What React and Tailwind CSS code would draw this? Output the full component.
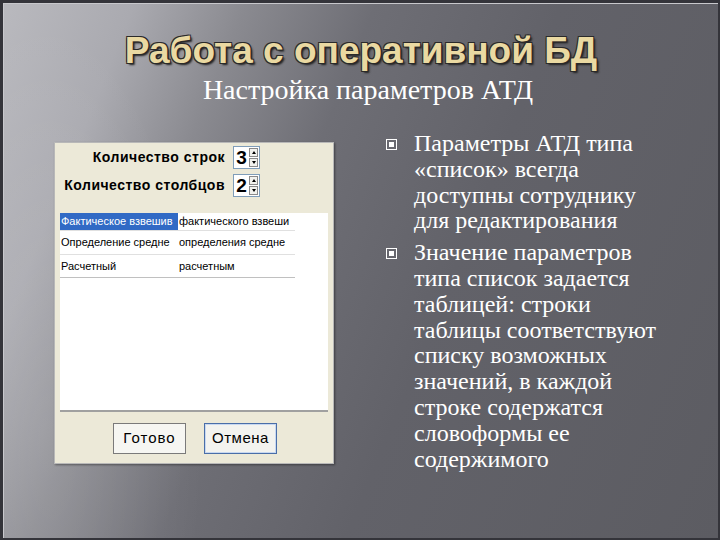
import React from "react";

function Spinner({ value }) {
  return (
    <div className="flex h-[23px] w-[27px] items-stretch border border-[#7f9db9] bg-white">
      <div className="flex flex-1 items-center justify-center font-['Liberation_Sans',sans-serif] text-[19px] font-bold leading-none text-black">
        {value}
      </div>
      <div className="flex w-[10px] flex-col gap-[1px] py-[1px] pr-[1px]">
        <div className="flex flex-1 items-center justify-center border border-[#8a8a8a] bg-[#f2f2ee]">
          <div className="h-0 w-0 border-x-[2px] border-b-[3px] border-x-transparent border-b-black" />
        </div>
        <div className="flex flex-1 items-center justify-center border border-[#8a8a8a] bg-[#f2f2ee]">
          <div className="h-0 w-0 border-x-[2px] border-t-[3px] border-x-transparent border-t-black" />
        </div>
      </div>
    </div>
  );
}

function Bullet() {
  return (
    <div className="mt-[8px] flex h-[11px] w-[11px] shrink-0 items-center justify-center border border-white">
      <div className="h-[5px] w-[5px] bg-white" />
    </div>
  );
}

function Lines({ lines }) {
  return (
    <div className="flex flex-col whitespace-nowrap">
      {lines.map((l) => (
        <span key={l}>{l}</span>
      ))}
    </div>
  );
}

export default function App() {
  return (
    <div className="h-[540px] w-[720px] overflow-hidden bg-[#34343a] pl-[3px] pt-[3px] pr-[2px] pb-[2px]">
      <div className="relative flex h-full w-full flex-col border-l border-t border-[#c8c8cc] bg-[radial-gradient(ellipse_160px_420px_at_40px_430px,rgba(255,255,255,0.12),transparent),linear-gradient(112deg,#b9b9be_0%,#aaaab0_14%,#8a8a90_26%,#6e6e75_40%,#626269_60%,#5c5c62_100%)]">
        <div className="pt-[25px] text-center font-['Liberation_Sans',sans-serif] text-[37px] font-bold leading-[44px] text-[#ead9a2] [text-shadow:1px_1px_0_#2a2a2a,-1px_-1px_0_#2a2a2a,1px_-1px_0_#2a2a2a,-1px_1px_0_#2a2a2a,2px_2px_2px_#222]">
          Работа с оперативной БД
        </div>
        <div className="mt-[1px] pl-[14px] text-center font-['Liberation_Serif',serif] text-[28px] leading-[32px] text-white">
          Настройка параметров АТД
        </div>

        <div className="mt-[24px] flex">
          <div className="ml-[50px] mt-[12px] flex h-[322px] w-[280px] flex-col border border-[#b8b8b8] bg-[#ece9d8] shadow-[1px_1px_2px_rgba(0,0,0,0.4)]">
            <div className="flex flex-col items-end gap-[5px] pr-[73px] pt-[3px] font-['Liberation_Sans',sans-serif] text-[14px] font-bold text-black">
              <div className="flex items-center gap-[8px]">
                <span className="tracking-[0.5px]">Количество строк</span>
                <Spinner value="3" />
              </div>
              <div className="flex items-center gap-[8px]">
                <span className="tracking-[0.5px]">Количество столбцов</span>
                <Spinner value="2" />
              </div>
            </div>
            <div className="mx-[5px] mt-[16px] flex h-[199px] flex-col border-b-2 border-[#a0a0a0] bg-white font-['Liberation_Sans',sans-serif] text-[11px] text-black">
              <div className="flex h-[18px] w-[235px] items-center border-b border-[#e0e0e0]">
                <div className="flex h-full w-[118px] items-center overflow-hidden whitespace-nowrap bg-[#316ac5] pl-[1px] text-white">
                  Фактическое взвешив
                </div>
                <div className="w-[117px] overflow-hidden whitespace-nowrap pl-[1px]">фактического взвеши</div>
              </div>
              <div className="flex h-[24px] w-[235px] items-center border-b border-[#e0e0e0]">
                <div className="w-[118px] overflow-hidden whitespace-nowrap pl-[1px]">Определение средне</div>
                <div className="w-[117px] overflow-hidden whitespace-nowrap pl-[1px]">определения средне</div>
              </div>
              <div className="flex h-[23px] w-[235px] items-center border-b border-[#c0c0c0]">
                <div className="w-[118px] overflow-hidden whitespace-nowrap pl-[1px]">Расчетный</div>
                <div className="w-[117px] overflow-hidden whitespace-nowrap pl-[1px]">расчетным</div>
              </div>
            </div>
            <div className="mt-[11px] flex gap-[18px] pl-[58px] font-['Liberation_Sans',sans-serif] text-[15px] text-black">
              <div className="flex h-[31px] w-[73px] items-center justify-center border border-[#7a7a7a] bg-[#f6f6f2] tracking-[1px]">
                Готово
              </div>
              <div className="flex h-[31px] w-[73px] items-center justify-center border border-[#4a6ea8] bg-[#f3f3ef] shadow-[inset_0_0_0_1px_#c8d8f0] tracking-[0.5px]">
                Отмена
              </div>
            </div>
          </div>

          <div className="ml-[52px] mt-[1px] flex w-[290px] flex-col gap-[6px] font-['Liberation_Serif',serif] text-[24px] leading-[25.8px] text-white">
            <div className="flex gap-[17px]">
              <Bullet />
              <Lines lines={["Параметры АТД типа", "«список» всегда", "доступны сотруднику", "для редактирования"]} />
            </div>
            <div className="flex gap-[17px]">
              <Bullet />
              <Lines
                lines={[
                  "Значение параметров",
                  "типа список задается",
                  "таблицей: строки",
                  "таблицы соответствуют",
                  "списку возможных",
                  "значений, в каждой",
                  "строке содержатся",
                  "словоформы ее",
                  "содержимого",
                ]}
              />
            </div>
          </div>
        </div>
      </div>
    </div>
  );
}
